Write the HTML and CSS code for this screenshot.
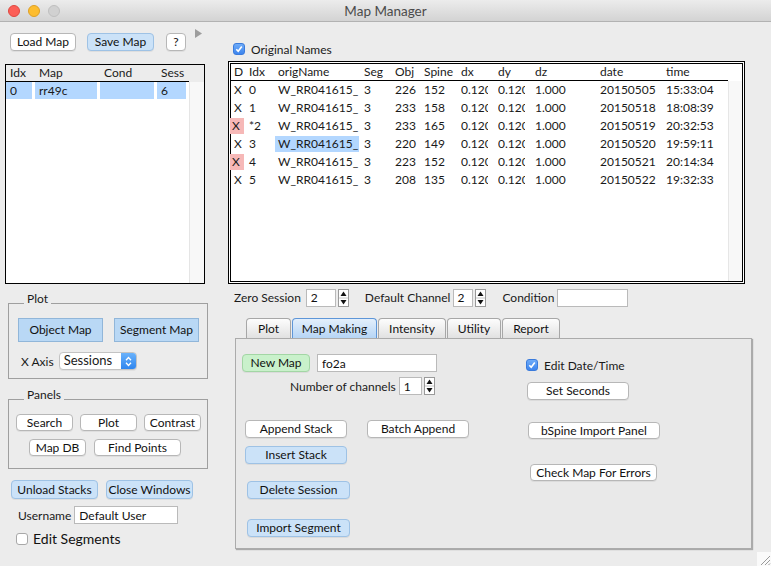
FILE: index.html
```html
<!DOCTYPE html>
<html>
<head>
<meta charset="utf-8">
<title>Map Manager</title>
<link rel="stylesheet" href="styles.css">
</head>
<body>
<div class="window">
  <div class="titlebar">
    <div class="lights">
      <span class="light red"></span>
      <span class="light yellow"></span>
      <span class="light gray"></span>
    </div>
    <div class="title">Map Manager</div>
    <div class="lights-spacer"></div>
  </div>

  <div class="main">
    <div class="left">
      <div class="toolbar">
        <button class="btn w-load">Load Map</button>
        <button class="btn blue w-save">Save Map</button>
        <button class="btn w-help">?</button>
        <svg class="disclosure" width="7" height="9" viewBox="0 0 7 9"><polygon points="0,0 7,4.5 0,9" fill="#9d9d9d"/></svg>
      </div>

      <div class="maplist">
        <div class="ml-head">
          <div class="ml-row head"><span>Idx</span><span>Map</span><span>Cond</span><span>Sess</span></div>
        </div>
        <div class="ml-body">
          <div class="ml-rows">
            <div class="ml-row data"><span class="sel">0</span><span class="sel">rr49c</span><span class="sel"></span><span class="sel">6</span></div>
          </div>
          <div class="ml-strip"></div>
        </div>
      </div>

      <div class="group plot-group">
        <span class="group-title">Plot</span>
        <div class="g-row1">
          <button class="btn sq w-map">Object Map</button>
          <button class="btn sq w-map">Segment Map</button>
        </div>
        <div class="g-row2">
          <span class="label">X Axis</span>
          <div class="popup">
            <span class="popup-text">Sessions</span>
            <span class="popup-arrows">
              <svg width="7" height="11" viewBox="0 0 7 11"><polyline points="1,4.2 3.5,1.5 6,4.2" fill="none" stroke="#fff" stroke-width="1.3"/><polyline points="1,6.8 3.5,9.5 6,6.8" fill="none" stroke="#fff" stroke-width="1.3"/></svg>
            </span>
          </div>
        </div>
      </div>

      <div class="group panels-group">
        <span class="group-title">Panels</span>
        <div class="p-row1">
          <button class="btn sm w-57">Search</button>
          <button class="btn sm w-57">Plot</button>
          <button class="btn sm w-57">Contrast</button>
        </div>
        <div class="p-row2">
          <button class="btn sm w-57">Map DB</button>
          <button class="btn sm w-87">Find Points</button>
        </div>
      </div>

      <div class="unload-row">
        <button class="btn blue tall w-87">Unload Stacks</button>
        <button class="btn blue tall w-87">Close Windows</button>
      </div>

      <div class="user-row">
        <span class="label">Username</span>
        <input class="field w-user" value="Default User">
      </div>

      <div class="seg-row">
        <span class="cb off"></span>
        <span class="seg-label">Edit Segments</span>
      </div>
    </div>

    <div class="right">
      <div class="orig-row">
        <span class="cb on"><svg width="8" height="8" viewBox="0 0 8 8"><polyline points="1.3,4.2 3.2,6.2 6.8,1.5" fill="none" stroke="#fff" stroke-width="1.6"/></svg></span>
        <span class="label">Original Names</span>
      </div>

      <div class="dtable">
        <div class="dt-inner">
          <div class="dt-head">
            <div class="dt-row head"><span>D</span><span>Idx</span><span>origName</span><span>Seg</span><span>Obj</span><span>Spine</span><span>dx</span><span>dy</span><span>dz</span><span>date</span><span>time</span></div>
          </div>
          <div class="dt-body">
            <div class="dt-rows">
              <div class="dt-row"><span>X</span><span>0</span><span>W_RR041615_</span><span>3</span><span>226</span><span>152</span><span><i class="clip">0.120</i></span><span><i class="clip">0.120</i></span><span>1.000</span><span>20150505</span><span>15:33:04</span></div>
              <div class="dt-row"><span>X</span><span>1</span><span>W_RR041615_</span><span>3</span><span>233</span><span>158</span><span><i class="clip">0.120</i></span><span><i class="clip">0.120</i></span><span>1.000</span><span>20150518</span><span>18:08:39</span></div>
              <div class="dt-row"><span class="pink">X</span><span>*2</span><span>W_RR041615_</span><span>3</span><span>233</span><span>165</span><span><i class="clip">0.120</i></span><span><i class="clip">0.120</i></span><span>1.000</span><span>20150519</span><span>20:32:53</span></div>
              <div class="dt-row"><span>X</span><span>3</span><span class="sel">W_RR041615_</span><span>3</span><span>220</span><span>149</span><span><i class="clip">0.120</i></span><span><i class="clip">0.120</i></span><span>1.000</span><span>20150520</span><span>19:59:11</span></div>
              <div class="dt-row"><span class="pink">X</span><span>4</span><span>W_RR041615_</span><span>3</span><span>223</span><span>152</span><span><i class="clip">0.120</i></span><span><i class="clip">0.120</i></span><span>1.000</span><span>20150521</span><span>20:14:34</span></div>
              <div class="dt-row"><span>X</span><span>5</span><span>W_RR041615_</span><span>3</span><span>208</span><span>135</span><span><i class="clip">0.120</i></span><span><i class="clip">0.120</i></span><span>1.000</span><span>20150522</span><span>19:32:33</span></div>
            </div>
            <div class="dt-strip"></div>
          </div>
        </div>
      </div>

      <div class="ctrl-row">
        <span class="label">Zero Session</span>
        <input class="field w-zero" value="2">
        <svg class="spin" width="11" height="18" viewBox="0 0 11 18"><rect x="0.5" y="0.5" width="10" height="17" fill="#fff" stroke="#9a9a9a"/><line x1="1" y1="9" x2="10" y2="9" stroke="#c8c8c8"/><polygon points="5.5,2.5 8.5,7 2.5,7" fill="#111"/><polygon points="5.5,15.5 8.5,11 2.5,11" fill="#111"/></svg>
        <span class="label lbl-chan">Default Channel</span>
        <input class="field w-chan" value="2">
        <svg class="spin" width="11" height="18" viewBox="0 0 11 18"><rect x="0.5" y="0.5" width="10" height="17" fill="#fff" stroke="#9a9a9a"/><line x1="1" y1="9" x2="10" y2="9" stroke="#c8c8c8"/><polygon points="5.5,2.5 8.5,7 2.5,7" fill="#111"/><polygon points="5.5,15.5 8.5,11 2.5,11" fill="#111"/></svg>
        <span class="label lbl-cond">Condition</span>
        <input class="field w-cond" value="">
      </div>

      <div class="tabs">
        <span class="tab w-t1">Plot</span>
        <span class="tab active w-t2">Map Making</span>
        <span class="tab w-t3">Intensity</span>
        <span class="tab w-t4">Utility</span>
        <span class="tab w-t5">Report</span>
      </div>

      <div class="panel">
        <div class="pcol-left">
          <div class="pr1">
            <button class="btn green w-new">New Map</button>
            <input class="field w-name" value="fo2a">
          </div>
          <div class="pr2">
            <span class="label">Number of channels</span>
            <input class="field w-nch" value="1">
            <svg class="spin" width="11" height="18" viewBox="0 0 11 18"><rect x="0.5" y="0.5" width="10" height="17" fill="#fff" stroke="#9a9a9a"/><line x1="1" y1="9" x2="10" y2="9" stroke="#c8c8c8"/><polygon points="5.5,2.5 8.5,7 2.5,7" fill="#111"/><polygon points="5.5,15.5 8.5,11 2.5,11" fill="#111"/></svg>
          </div>
          <div class="pr3">
            <button class="btn w-102">Append Stack</button>
            <button class="btn w-102">Batch Append</button>
          </div>
          <div class="pr4">
            <button class="btn blue w-102">Insert Stack</button>
          </div>
          <div class="pr5">
            <button class="btn blue w-103">Delete Session</button>
          </div>
          <div class="pr6">
            <button class="btn blue w-103">Import Segment</button>
          </div>
        </div>
        <div class="pcol-right">
          <div class="qr1">
            <span class="cb on"><svg width="8" height="8" viewBox="0 0 8 8"><polyline points="1.3,4.2 3.2,6.2 6.8,1.5" fill="none" stroke="#fff" stroke-width="1.6"/></svg></span>
            <span class="label">Edit Date/Time</span>
          </div>
          <div class="qr2"><button class="btn w-102">Set Seconds</button></div>
          <div class="qr3"><button class="btn sm w-132">bSpine Import Panel</button></div>
          <div class="qr4"><button class="btn sm w-127">Check Map For Errors</button></div>
        </div>
      </div>
    </div>
  </div>

  <svg class="grip" width="14" height="14" viewBox="0 0 14 14"><rect width="14" height="14" fill="#fafafa"/><line x1="4" y1="13" x2="13" y2="4" stroke="#9a9a9a"/><line x1="8" y1="13" x2="13" y2="8" stroke="#9a9a9a"/><line x1="11.5" y1="13" x2="13" y2="11.5" stroke="#9a9a9a"/></svg>
</div>
</body>
</html>
```

FILE: styles.css
```css
* { box-sizing: border-box; }
html, body { margin: 0; padding: 0; }
body {
  background: #ececec;
  font-family: Lato, "DejaVu Sans", sans-serif;
  font-size: 12px;
  color: #1a1a1a;
}
.window {
  width: 771px;
  height: 566px;
  position: relative;
  overflow: hidden;
  background: #ececec;
}

/* title bar */
.titlebar {
  height: 22px;
  display: flex;
  align-items: center;
  background: linear-gradient(#ececec, #d3d3d3);
  border-bottom: 1px solid #b2b2b2;
}
.lights { width: 70px; display: flex; gap: 8px; padding-left: 8px; }
.lights-spacer { width: 70px; }
.light { width: 12px; height: 12px; border-radius: 50%; }
.light.red { background: #fc5f57; border: 1px solid #df4840; }
.light.yellow { background: #fdbd2f; border: 1px solid #dea025; }
.light.gray { background: #d1d1d1; border: 1px solid #bfbfbf; }
.title { flex: 1; text-align: center; font-size: 13.5px; color: #4b4b4b; }

.main { display: flex; }
.left { width: 228px; flex: none; }
.right { flex: 1; }

/* buttons */
.btn {
  font: inherit;
  font-size: 12px;
  color: #111;
  height: 18px;
  padding: 0;
  margin: 0;
  background: #fff;
  border: 1px solid #b7b7b7;
  border-radius: 4px;
  box-shadow: 0 1px 0 rgba(0, 0, 0, 0.06);
  line-height: 16px;
  text-align: center;
  white-space: nowrap;
  flex: none;
}
.btn.sm { height: 17px; line-height: 15px; }
.btn.tall { height: 19px; line-height: 17px; }
.btn.blue { background: #cbe2f8; border-color: #9ec2e5; }
.btn.green { background: #c9f1cb; border-color: #a3d6a5; }
.btn.sq {
  border-radius: 0;
  background: #b9d8f5;
  border-color: #91b6d9;
  height: 24px;
  line-height: 22px;
  box-shadow: none;
}
.w-load { width: 66px; margin-right: 11px; }
.w-save { width: 67px; margin-right: 12px; }
.w-help { width: 20px; margin-right: 9px; }
.w-map { width: 85px; }
.w-57 { width: 57px; }
.w-87 { width: 87px; }
.w-102 { width: 102px; }
.w-103 { width: 103px; }
.w-132 { width: 132px; }
.w-127 { width: 127px; }
.w-new { width: 68px; }

.label { white-space: nowrap; color: #1a1a1a; }

.field {
  font: inherit;
  font-size: 12px;
  color: #111;
  height: 18px;
  margin: 0;
  padding: 0 4px;
  border: 1px solid #bababa;
  background: #fff;
  outline: none;
  flex: none;
}
.w-user { width: 104px; }
.w-zero { width: 30px; }
.w-chan { width: 20px; padding: 0 3px; }
.w-cond { width: 71px; }
.w-name { width: 120px; }
.w-nch { width: 23px; }
.spin { flex: none; display: block; }

/* checkboxes */
.cb {
  width: 12px;
  height: 12px;
  border-radius: 3px;
  flex: none;
  display: flex;
  align-items: center;
  justify-content: center;
}
.cb.on { background: linear-gradient(#6eabf8, #3d85ee); border: 1px solid #3a7bdc; }
.cb.off { background: #fff; border: 1px solid #a8a8a8; }

/* left column */
.toolbar {
  display: flex;
  align-items: flex-start;
  margin-top: 11px;
  padding-left: 10px;
}
.disclosure { margin-top: -4px; display: block; }

.maplist {
  margin: 13px 0 0 5px;
  width: 200px;
  height: 220px;
  border: 1px solid #000;
  background: #fff;
  display: flex;
  flex-direction: column;
}
.ml-head { height: 17px; background: #ececec; display: flex; flex: none; }
.ml-head .ml-row { border-bottom: 1px solid #000; }
.ml-body { flex: 1; display: flex; }
.ml-rows { width: 183px; }
.ml-strip { flex: 1; background: #f8f8f8; border-left: 1px solid #e5e5e5; }
.ml-row {
  width: 183px;
  display: grid;
  grid-template-columns: 26px 62px 54px 29px;
  column-gap: 3px;
  height: 17px;
}
.ml-row > span { padding-left: 4px; line-height: 16px; white-space: nowrap; }
.ml-row.data > span { line-height: 17px; }
.sel { background: #b3d7ff; }
.pink { background: #f6b8b7; }

.group {
  position: relative;
  border: 1px solid #9f9f9f;
  width: 200px;
}
.group-title {
  position: absolute;
  top: -12px;
  left: 15px;
  padding: 0 3px;
  background: #ececec;
  line-height: 14px;
}
.plot-group { margin: 19px 0 0 8px; height: 76px; }
.g-row1 { display: flex; gap: 11px; margin: 14px 0 0 9px; }
.g-row2 { display: flex; align-items: center; gap: 5px; margin: 10px 0 0 12px; height: 18px; }
.popup {
  display: flex;
  width: 78px;
  height: 18px;
  border: 1px solid #c3c3c3;
  border-radius: 4px;
  background: #fff;
  overflow: hidden;
  box-shadow: 0 1px 0 rgba(0, 0, 0, 0.05);
}
.popup-text { flex: 1; padding-left: 4px; font-size: 13px; line-height: 15px; }
.popup-arrows {
  width: 15px;
  background: linear-gradient(#6ab2fb, #2f86ef);
  display: flex;
  align-items: center;
  justify-content: center;
}

.panels-group { margin: 20px 0 0 8px; height: 70px; }
.p-row1 { display: flex; gap: 7px; margin: 14px 0 0 7px; }
.p-row2 { display: flex; gap: 8px; margin: 8px 0 0 20px; }

.unload-row { display: flex; gap: 8px; margin: 11px 0 0 11px; }
.user-row { display: flex; align-items: center; gap: 3px; margin: 7px 0 0 18px; height: 18px; }
.seg-row { display: flex; align-items: center; gap: 5px; margin: 9px 0 0 16px; height: 12px; }
.seg-label { font-size: 14px; color: #111; line-height: 12px; }

/* right column */
.orig-row { display: flex; align-items: center; gap: 6px; margin: 21px 0 0 5px; height: 12px; }

.dtable {
  margin-top: 6px;
  width: 517px;
  height: 223px;
  border: 1px solid #000;
  padding: 1px;
  background: #fff;
}
.dt-inner {
  height: 100%;
  border: 1px solid #000;
  display: flex;
  flex-direction: column;
}
.dt-head { height: 17px; flex: none; }
.dt-head .dt-row { height: 17px; border-bottom: 1px solid #000; }
.dt-head .dt-row > span { margin: 0; }
.dt-body { flex: 1; display: flex; }
.dt-rows { width: 497px; }
.dt-strip { flex: 1; background: #f8f8f8; border-left: 1px solid #e6e6e6; }
.dt-row {
  width: 497px;
  display: grid;
  grid-template-columns: 13px 27px 84px 29px 27px 35px 35px 35px 63px 64px 65px;
  column-gap: 2px;
  height: 18px;
}
.dt-row > span {
  padding-left: 3px;
  white-space: nowrap;
  overflow: hidden;
  line-height: 16px;
  margin: 1px 0;
}
.dt-row > span.pink { padding-left: 2px; margin-left: -1px; }
.clip { font-style: normal; display: block; width: 27px; overflow: hidden; white-space: nowrap; }

.ctrl-row { display: flex; align-items: center; margin: 4px 0 0 6px; height: 19px; }
.ctrl-row .w-zero { margin-left: 5px; }
.ctrl-row .spin { margin-left: 2px; }
.lbl-chan { margin-left: 16px; margin-right: 3px; }
.lbl-cond { margin-left: 16px; margin-right: 3px; }

.tabs { display: flex; gap: 1px; margin: 11px 0 0 18px; height: 20px; }
.tab {
  height: 20px;
  border: 1px solid #a7a7a7;
  border-bottom: none;
  border-radius: 4px 4px 0 0;
  background: linear-gradient(#fdfdfd, #e1e1e1);
  text-align: center;
  line-height: 19px;
  white-space: nowrap;
  color: #111;
}
.tab.active {
  background: linear-gradient(#e3effc, #b6d5f5);
  border-color: #5e96d8;
}
.w-t1 { width: 45px; }
.w-t2 { width: 85px; }
.w-t3 { width: 68px; }
.w-t4 { width: 54px; }
.w-t5 { width: 58px; }

.panel {
  margin-left: 7px;
  width: 517px;
  height: 211px;
  background: #e9e9e9;
  border: 1px solid #ababab;
  box-shadow: 1px 1px 1px rgba(0, 0, 0, 0.28);
  display: flex;
}
.pcol-left { width: 290px; flex: none; }
.pcol-right { flex: 1; }
.pr1 { display: flex; gap: 7px; margin: 15px 0 0 6px; }
.pr2 { display: flex; align-items: center; margin: 5px 0 0 54px; height: 18px; }
.pr2 .field { margin-left: 3px; margin-right: 2px; }
.pr3 { display: flex; gap: 20px; margin: 25px 0 0 9px; }
.pr4 { display: flex; margin: 8px 0 0 9px; }
.pr5 { display: flex; margin: 17px 0 0 11px; }
.pr6 { display: flex; margin: 20px 0 0 11px; }

.qr1 { display: flex; align-items: center; gap: 6px; margin-top: 20px; height: 12px; }
.qr2 { display: flex; margin: 11px 0 0 1px; }
.qr3 { display: flex; margin: 22px 0 0 2px; }
.qr4 { display: flex; margin: 25px 0 0 4px; }

.grip { position: absolute; right: 0; bottom: 0; display: block; }
```
